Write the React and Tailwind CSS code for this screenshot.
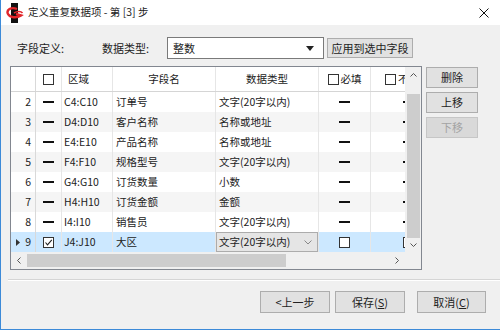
import React from "react";

const rows = [
  { n: 2, area: "C4:C10", name: "订单号", type: "文字(20字以内)" },
  { n: 3, area: "D4:D10", name: "客户名称", type: "名称或地址" },
  { n: 4, area: "E4:E10", name: "产品名称", type: "名称或地址" },
  { n: 5, area: "F4:F10", name: "规格型号", type: "文字(20字以内)" },
  { n: 6, area: "G4:G10", name: "订货数量", type: "小数" },
  { n: 7, area: "H4:H10", name: "订货金额", type: "金额" },
  { n: 8, area: "I4:I10", name: "销售员", type: "文字(20字以内)" },
  { n: 9, area: "J4:J10", name: "大区", type: "文字(20字以内)", selected: true },
];

function Box({ checked }) {
  return (
    <div className="w-[11px] h-[11px] border border-[#333] bg-white flex items-center justify-center shrink-0">
      {checked && (
        <svg width="9" height="9" viewBox="0 0 9 9">
          <path d="M1.5 4.5 L3.5 6.8 L7.8 1.8" fill="none" stroke="#222" strokeWidth="1.1" />
        </svg>
      )}
    </div>
  );
}

function Dash() {
  return <div className="w-[11px] h-[2px] bg-[#111] shrink-0" />;
}

function Btn({ children, className = "", disabled }) {
  return (
    <div
      className={
        "flex items-center justify-center border " +
        (disabled
          ? "bg-[#d9d9d9] border-[#c6c6c6] text-[#a3a3a3] "
          : "bg-[#e1e1e1] border-[#adadad] text-[#222] ") +
        className
      }
    >
      {children}
    </div>
  );
}

function Row({ r, i }) {
  const bg = r.selected ? "bg-[#cce8ff]" : i % 2 === 1 ? "bg-[#f5f5f5]" : "bg-white";
  return (
    <div className={"flex h-[20px] items-center text-[10.5px] text-[#222] " + bg}>
      <div className="w-[25px] h-full border-r border-[#d9d9d9] flex items-center justify-end pr-[4px] gap-[5px]">
        {r.selected && (
          <svg width="4" height="7" viewBox="0 0 4 7">
            <path d="M0 0 L4 3.5 L0 7 Z" fill="#333" />
          </svg>
        )}
        <span>{r.n}</span>
      </div>
      <div className="w-[26px] h-full border-r border-[#e6e6e6] flex items-center justify-center">
        {r.selected ? <Box checked /> : <Dash />}
      </div>
      <div className="w-[51px] h-full border-r border-[#e6e6e6] flex items-center pl-[2px]">{r.area}</div>
      <div className="w-[103px] h-full border-r border-[#e6e6e6] flex items-center pl-[3px]">{r.name}</div>
      <div className="w-[103px] h-full border-r border-[#e6e6e6] flex items-center">
        {r.selected ? (
          <div className="w-full h-full border border-[#acacac] bg-[#e5e5e5] flex items-center justify-between pl-[2px] pr-[5px]">
            <span>{r.type}</span>
            <svg width="8" height="5" viewBox="0 0 8 5">
              <path d="M0.5 0.5 L4 4 L7.5 0.5" fill="none" stroke="#888" strokeWidth="1" />
            </svg>
          </div>
        ) : (
          <span className="pl-[3px]">{r.type}</span>
        )}
      </div>
      <div className="w-[52px] h-full border-r border-[#e6e6e6] flex items-center justify-center">
        {r.selected ? <Box /> : <Dash />}
      </div>
      <div className="w-[80px] h-full flex items-center pl-[32px]">
        {r.selected ? <Box /> : <Dash />}
      </div>
    </div>
  );
}

export default function App() {
  return (
    <div className="w-[500px] h-[330px] bg-[#f0f0f0] border-l border-b border-[#3c8ad8] flex flex-col font-['Noto_Sans_CJK_SC',sans-serif] text-[11px] text-[#222] leading-none overflow-hidden">
      {/* title bar */}
      <div className="h-[25px] bg-white flex items-center shrink-0">
        <svg width="20" height="22" viewBox="0 0 20 22" className="ml-[4px]">
          <rect x="6" y="1" width="7" height="20" fill="#111" />
          <path d="M12 7 C6 4.5 1 8 3 12 C5 16 12 16 16 13.5 L11 12" fill="none" stroke="#e1262b" strokeWidth="2.4" />
          <path d="M9 11 C12 9 16 9 17.5 11" fill="none" stroke="#e1262b" strokeWidth="1.6" />
        </svg>
        <span className="ml-[3px] text-[10.5px]">定义重复数据项 - 第 [3] 步</span>
        <svg width="10" height="10" viewBox="0 0 10 10" className="ml-auto mr-[11px]">
          <path d="M0.5 0.5 L9.5 9.5 M9.5 0.5 L0.5 9.5" stroke="#111" strokeWidth="1" />
        </svg>
      </div>

      {/* field definition line */}
      <div className="flex items-center h-[22px] mt-[12px] pl-[16px]">
        <span className="w-[85px]">字段定义:</span>
        <span className="w-[65px]">数据类型:</span>
        <div className="w-[157px] h-[22px] bg-white border border-[#7a7a7a] flex items-center justify-between pl-[5px] pr-[9px]">
          <span>整数</span>
          <svg width="8" height="5" viewBox="0 0 8 5">
            <path d="M0 0 L8 0 L4 5 Z" fill="#222" />
          </svg>
        </div>
        <Btn className="ml-[3px] w-[86px] h-[20px]">应用到选中字段</Btn>
      </div>

      {/* grid + side buttons */}
      <div className="flex mt-[7px] pl-[9px]">
        <div className="w-[412px] h-[204px] border border-[#828790] bg-white flex flex-col">
          <div className="flex h-[185px]">
            <div className="w-[394px] overflow-hidden">
              <div className="w-[440px]">
                <div className="flex h-[25px] border-b border-[#d5d5d5] bg-white items-center text-[10.5px]">
                  <div className="w-[25px] h-full border-r border-[#d9d9d9]" />
                  <div className="w-[26px] h-full border-r border-[#e6e6e6] flex items-center justify-center">
                    <Box />
                  </div>
                  <div className="w-[51px] h-full border-r border-[#e6e6e6] flex items-center pl-[6px]">区域</div>
                  <div className="w-[103px] h-full border-r border-[#e6e6e6] flex items-center justify-center">字段名</div>
                  <div className="w-[103px] h-full border-r border-[#e6e6e6] flex items-center justify-center">数据类型</div>
                  <div className="w-[52px] h-full border-r border-[#e6e6e6] flex items-center justify-center gap-[2px]">
                    <Box />
                    <span>必填</span>
                  </div>
                  <div className="w-[80px] h-full flex items-center pl-[14px] gap-[2px]">
                    <Box />
                    <span>不重复</span>
                  </div>
                </div>
                {rows.map((r, i) => (
                  <Row key={r.n} r={r} i={i} />
                ))}
              </div>
            </div>
            {/* vertical scrollbar */}
            <div className="w-[16px] h-full bg-[#f0f0f0] flex flex-col items-center">
              <div className="h-[17px] flex items-center justify-center">
                <svg width="7" height="4" viewBox="0 0 7 4">
                  <path d="M0.5 3.5 L3.5 0.5 L6.5 3.5" fill="none" stroke="#555" strokeWidth="1" />
                </svg>
              </div>
              <div className="flex-1 w-full flex flex-col items-center pt-[11px]">
                <div className="w-[13px] h-[144px] bg-[#cdcdcd]" />
              </div>
              <div className="h-[14px] flex items-center justify-center">
                <svg width="7" height="4" viewBox="0 0 7 4">
                  <path d="M0.5 0.5 L3.5 3.5 L6.5 0.5" fill="none" stroke="#555" strokeWidth="1" />
                </svg>
              </div>
            </div>
          </div>
          {/* horizontal scrollbar */}
          <div className="flex h-[17px]">
            <div className="w-[394px] bg-[#f0f0f0] flex items-center">
              <div className="w-[16px] flex justify-center">
                <svg width="4" height="7" viewBox="0 0 4 7">
                  <path d="M3.5 0.5 L0.5 3.5 L3.5 6.5" fill="none" stroke="#555" strokeWidth="1" />
                </svg>
              </div>
              <div className="w-[259px] h-[13px] bg-[#cdcdcd]" />
              <div className="ml-auto w-[16px] flex justify-center">
                <svg width="4" height="7" viewBox="0 0 4 7">
                  <path d="M0.5 0.5 L3.5 3.5 L0.5 6.5" fill="none" stroke="#555" strokeWidth="1" />
                </svg>
              </div>
            </div>
            <div className="w-[16px] bg-[#f0f0f0]" />
          </div>
        </div>

        <div className="ml-[4px] mt-[1px] flex flex-col gap-[4px]">
          <Btn className="w-[52px] h-[21px]">删除</Btn>
          <Btn className="w-[52px] h-[21px]">上移</Btn>
          <Btn className="w-[52px] h-[21px]" disabled>下移</Btn>
        </div>
      </div>

      {/* separator */}
      <div className="ml-[7px] mt-[9px] h-[1px] bg-[#d5d5d5] border-b border-white box-content" />

      {/* footer buttons */}
      <div className="flex justify-end pr-[14px] mt-[10px]">
        <Btn className="w-[70px] h-[22px]">&lt;上一步</Btn>
        <Btn className="w-[70px] h-[22px] ml-[5px]">
          保存(<span className="underline">S</span>)
        </Btn>
        <Btn className="w-[69px] h-[22px] ml-[12px]">
          取消(<span className="underline">C</span>)
        </Btn>
      </div>
    </div>
  );
}
